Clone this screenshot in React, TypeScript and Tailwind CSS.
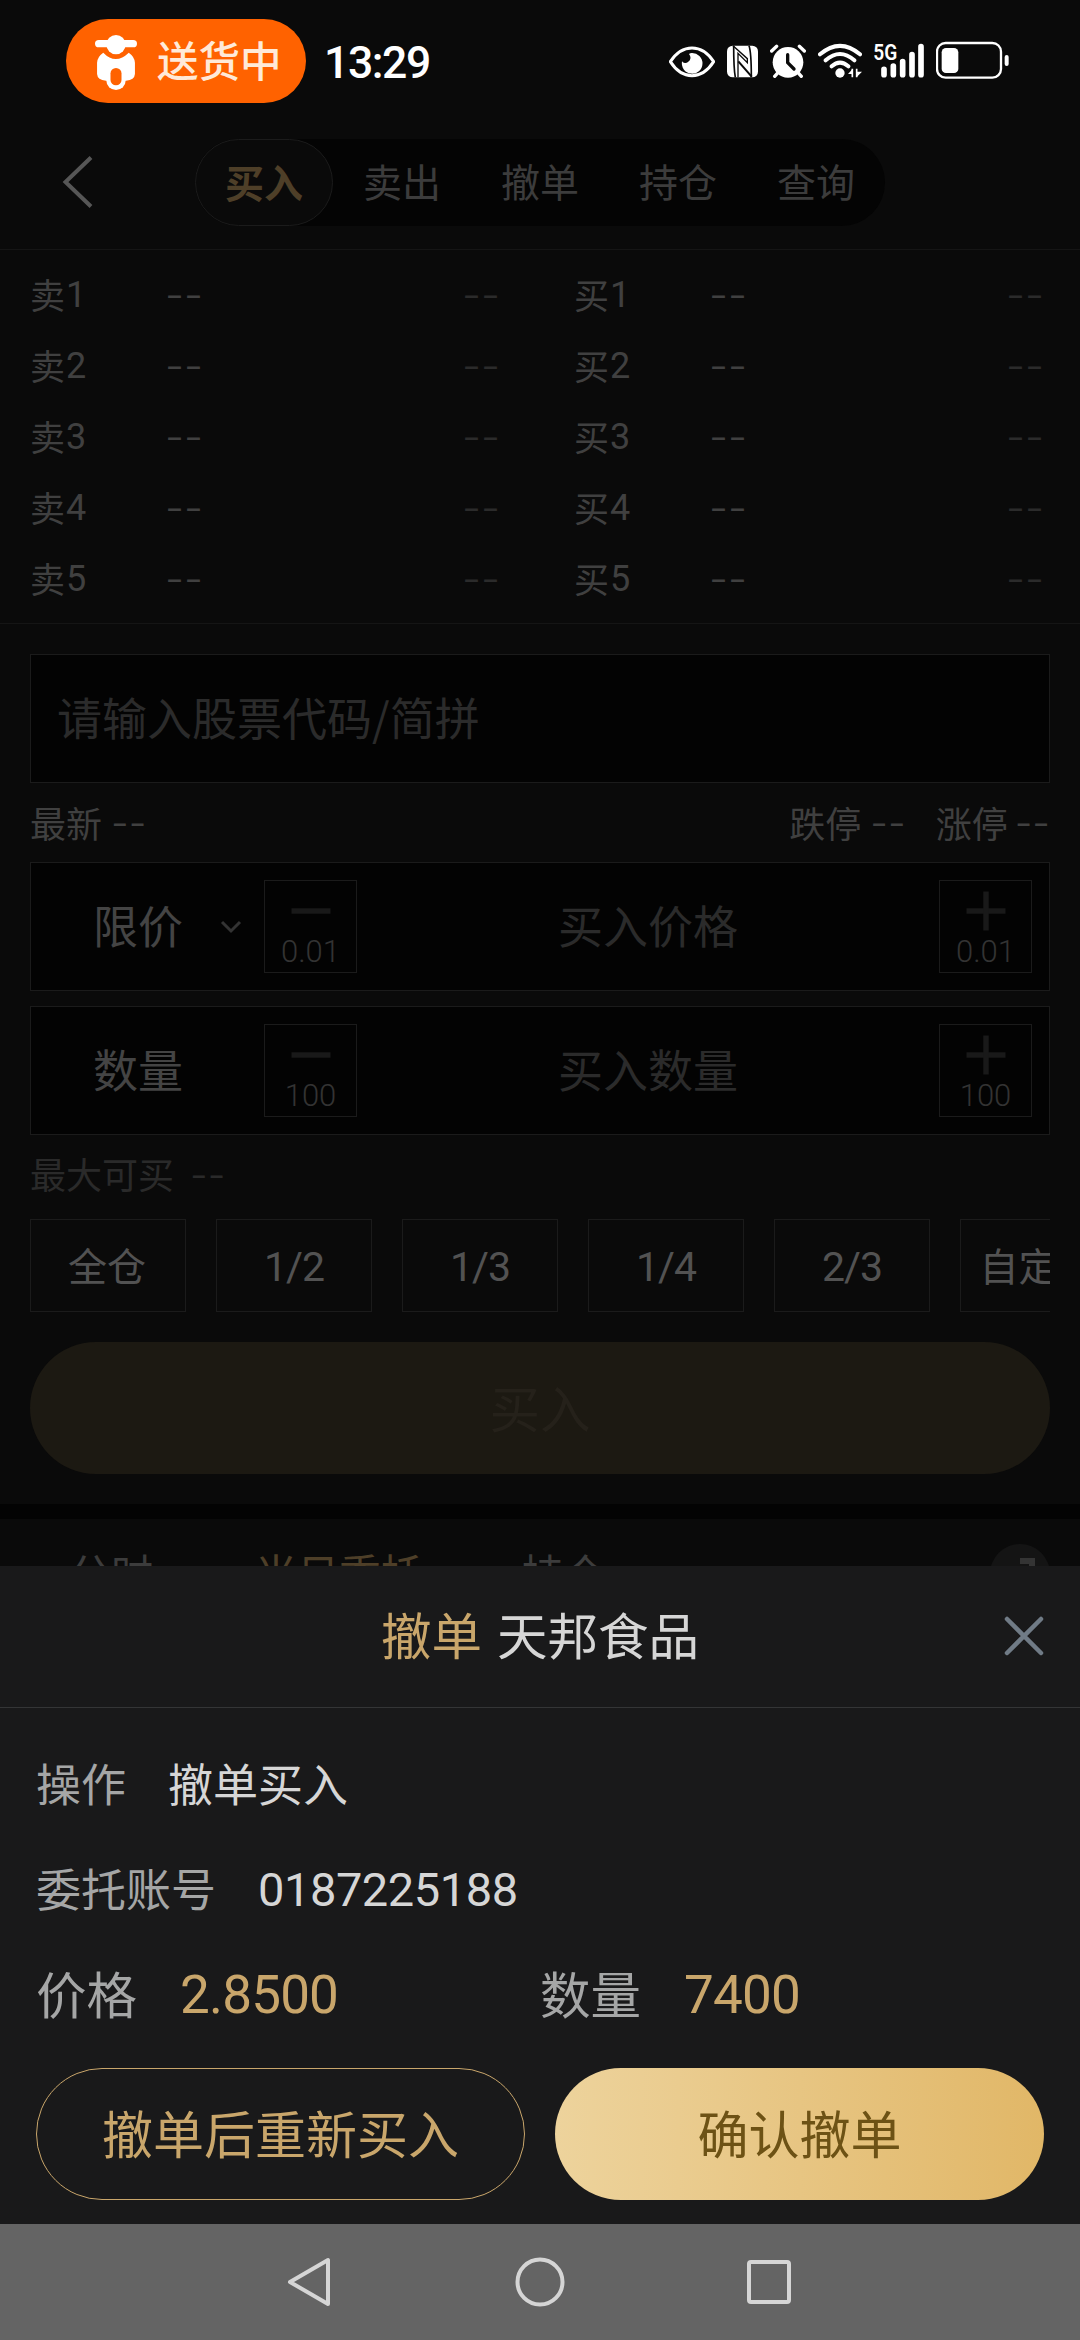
const tabs = ["卖出", "撤单", "持仓", "查询"];
const levels = [1, 2, 3, 4, 5];
const ratios = ["1/2", "1/3", "1/4", "2/3"];

function StatusBar() {
    return (
        <div className="flex h-[124px] items-start">
            <div className="mt-[19px] ml-[66px] flex h-[84px] w-[240px] items-center rounded-full bg-[#ff6200] pl-[29px]">
                <svg className="h-[55px] w-[42px] mb-[-2px]" viewBox="276 105 122 165" preserveAspectRatio="none" fill="#fff">
                    <rect x="276" y="120" width="122" height="22" rx="11" />
                    <ellipse cx="337" cy="134" rx="28" ry="29" />
                    <path d="M300 158 Q336 196 374 158 Q391 170 392 188 V222 Q391 240 366 242 H308 Q283 240 282 222 V188 Q283 170 300 158Z" />
                    <rect x="309" y="192" width="56" height="78" rx="28" />
                    <rect x="321" y="204" width="32" height="52" rx="16" fill="#ff6200" />
                </svg>
                <span className="ml-[20px] pb-[3px] text-[41.5px] leading-none font-medium text-[#ffead8]">送货中</span>
            </div>
            <span className="mt-[37px] ml-[18px] w-[109px] font-['Roboto'] text-[44.5px] font-medium leading-[52px] tracking-[-1.4px] text-white">13:29</span>
            <div className="mt-[32px] ml-auto flex gap-3 pr-[71px]">
                {/* eye comfort */}
                <svg className="h-[60px] w-[46px]" viewBox="27 0 138 180" fill="none">
                    <path d="M31 89 Q58 48 96 48 Q134 48 161 89 Q134 131 96 131 Q58 131 31 89Z" stroke="#fff" strokeWidth="9" strokeLinejoin="round" />
                    <path d="M95 63 A31 31 0 1 1 66 88 A12 12 0 0 0 84 90 Q98 80 87 66 Q91 63 95 63Z" fill="#fff" />
                </svg>
                {/* nfc */}
                <svg className="h-[60px] w-[31px]" viewBox="201 0 93 180">
                    <rect x="201" y="41" width="93" height="95" rx="17" fill="#fff" />
                    <path d="M221 41 Q221 110 226 136 M267 41 Q274 60 274 136" stroke="#0a0a0a" strokeWidth="5" fill="none" />
                    <path d="M219 41 L262 80 V92 L234 64 V136" stroke="#0a0a0a" strokeWidth="4" fill="none" />
                    <path d="M235 88 L275 134" stroke="#0a0a0a" strokeWidth="6" />
                </svg>
                {/* alarm */}
                <svg className="h-[60px] w-[36px]" viewBox="330 0 108 180" fill="none" strokeLinecap="round">
                    <circle cx="384" cy="91" r="46" fill="#fff" />
                    <path d="M335 57 L350 43 M433 57 L418 43 M352 124 L344 133 M416 124 L424 133" stroke="#fff" strokeWidth="10" />
                    <path d="M383 68 V92 L402 111" stroke="#0a0a0a" strokeWidth="10" />
                </svg>
                {/* wifi */}
                <svg className="h-[60px] w-[44px]" viewBox="474 0 132 180" fill="none" strokeLinecap="round">
                    <path d="M480 67 Q540 16 600 67 M497 85 Q540 47 583 85 M515 103 Q540 81 565 103" stroke="#fff" strokeWidth="12" />
                    <circle cx="540" cy="123" r="14" fill="#fff" />
                    <path d="M577 110 V136 M590 136 V110" stroke="#fff" strokeWidth="5" strokeLinecap="butt" />
                    <path d="M564 126 L577 112 V126Z M606 119 L591 134 V119Z" fill="#fff" />
                </svg>
                {/* cellular */}
                <svg className="h-[60px] w-[50px]" viewBox="642 0 150 180" strokeLinecap="round">
                    <text x="640" y="83" fill="#fff" fontFamily="Roboto, sans-serif" fontSize="67" fontWeight="600" textLength="72" lengthAdjust="spacingAndGlyphs">5G</text>
                    <path d="M672 112 V128 M700 102 V128 M728 89 V128 M756 68 V128 M783 44 V128" stroke="#fff" strokeWidth="17" />
                </svg>
                {/* battery */}
                <svg className="h-[60px] w-[73px]" viewBox="828 0 219 180" fill="none">
                    <rect x="831" y="33" width="192" height="104" rx="26" stroke="#fff" strokeWidth="7" />
                    <rect x="845" y="48" width="50" height="75" rx="13" fill="#fff" />
                    <rect x="1034" y="69" width="12" height="33" rx="6" fill="#fff" />
                </svg>
            </div>
        </div>
    );
}

function NavTabs() {
    return (
        <div className="flex h-[126px] border-b border-[#151515]">
            <svg className="mt-[31px] ml-[60px] h-[54px] w-[34px]" viewBox="0 0 34 54" fill="none" stroke="#565656" strokeWidth="4">
                <path d="M31 2.5 L5.5 27 L31 51.5" />
            </svg>
            <div className="mt-[15px] ml-[101px] flex h-[87px] w-[690px] rounded-full bg-[#040404] text-[39px] text-[#3c3c3c]">
                <div className="flex w-[138px] items-center justify-center rounded-full border border-[#1b1b1b] bg-[#0a0a0a] pb-[3px] leading-none font-bold text-[#4e3f28]">买入</div>
                {tabs.map((tab) => (
                    <div key={tab} className="flex w-[138px] items-center justify-center pb-[4px] leading-none">{tab}</div>
                ))}
            </div>
        </div>
    );
}

function QuoteSide({ side }: { side: string }) {
    return (
        <div className="w-[470px]">
            {levels.map((n) => (
                <div key={n} className="flex h-[71px] items-center text-[35px] leading-none text-[#404040]">
                    <div className="flex w-[135px] items-center pb-[2px]">
                        <span>{side}</span>
                        <span className="ml-[1px] pt-[3px] font-['Roboto'] text-[36px]">{n}</span>
                    </div>
                    <Dashes className="text-[42px] text-[#404040]" />
                    <Dashes className="ml-auto text-[42px] text-[#2b2b2b]" />
                </div>
            ))}
        </div>
    );
}

function Dashes({ className }: { className: string }) {
    return <span className={`font-['Inter'] font-light leading-none ${className}`}>--</span>;
}

function StepButton({ plus, step }: { plus?: boolean; step: string }) {
    return (
        <div className="flex h-[93px] w-[93px] flex-col items-center border border-[#1b1b1b] pt-[10px]">
            <svg className="h-[40px] w-[40px]" viewBox="0 0 40 40" stroke="#191919" strokeWidth="5.5">
                <path d="M0.5 20 H39.5" />
                {plus && <path d="M20 0.5 V39.5" />}
            </svg>
            <span className="mt-[5px] font-['Roboto'] text-[31px] font-light leading-none text-[#333]">{step}</span>
        </div>
    );
}

function StepRow({ label, placeholder, step, chevron }: { label: string; placeholder: string; step: string; chevron?: boolean }) {
    return (
        <div className="flex h-[129px] items-center border border-[#1b1b1b] bg-[#030303] pr-[17px] text-[45px] leading-none">
            <div className="flex w-[233px] items-center pl-[62px]">
                <span className="pb-[4px] text-[#444]">{label}</span>
                {chevron && (
                    <svg className="ml-[37px] h-[14px] w-[22px]" viewBox="0 0 22 14" fill="none" stroke="#333" strokeWidth="3">
                        <path d="M2 2 L11 11 L20 2" />
                    </svg>
                )}
            </div>
            <StepButton step={step} />
            <span className="flex-1 pb-[4px] text-center text-[#2b2b2b]">{placeholder}</span>
            <StepButton plus step={step} />
        </div>
    );
}

function OrderForm() {
    return (
        <div className="flex flex-col px-[30px] pt-[30px]">
            <div className="flex h-[129px] items-center border border-[#1b1b1b] bg-[#030303] pb-[4px] pl-[26px] text-[45px] leading-none text-[#2b2b2b]">请输入股票代码/简拼</div>
            <div className="flex h-[79px] items-center text-[36px] leading-none text-[#404040]">
                <span className="pb-[2px]">最新</span>
                <Dashes className="ml-[9px] text-[39px]" />
                <span className="ml-auto pb-[2px]">跌停</span>
                <Dashes className="ml-[9px] text-[39px]" />
                <span className="ml-[30px] pb-[2px]">涨停</span>
                <Dashes className="ml-[7px] text-[39px]" />
            </div>
            <StepRow label="限价" placeholder="买入价格" step="0.01" chevron />
            <div className="h-[15px]" />
            <StepRow label="数量" placeholder="买入数量" step="100" />
            <div className="flex h-[84px] items-center pb-[8px] text-[36px] leading-none text-[#2a2a2a]">
                <span>最大可买</span>
                <Dashes className="ml-[16px] pt-[2px] text-[39px]" />
            </div>
            <div className="flex gap-[30px] overflow-hidden text-[39px] leading-none text-[#525252]">
                <div className="flex h-[93px] w-[156px] shrink-0 items-center justify-center border border-[#1b1b1b] pr-[2px] pb-[2px]">全仓</div>
                {ratios.map((r) => (
                    <div key={r} className="flex h-[93px] w-[156px] shrink-0 items-center justify-center border border-[#1b1b1b] pt-[3px] font-['Roboto'] text-[41px] tracking-[-1px]">{r}</div>
                ))}
                <div className="flex h-[93px] w-[156px] shrink-0 items-center justify-center border border-[#1b1b1b] pb-[2px]">自定义</div>
            </div>
            <div className="mt-[30px] flex h-[132px] items-center justify-center rounded-full bg-[#1c1912] pb-[4px] text-[50.5px] leading-none text-[#25211a]">买入</div>
        </div>
    );
}

function ListTabs() {
    return (
        <div className="mt-[30px] border-t-[15px] border-[#030303]">
            <div className="flex h-[110px] items-center pr-[30px] pl-[69px] text-[42px] leading-none text-[#3c3c3c]">
                <span className="pb-[4px]">分时</span>
                <span className="ml-[102px] pb-[4px] text-[#4e3f28]">当日委托</span>
                <span className="ml-[99px] pb-[4px]">持仓</span>
                <svg className="ml-auto h-[60px] w-[60px]" viewBox="0 0 60 60" fill="none">
                    <circle cx="30" cy="30" r="30" fill="#141414" />
                    <path d="M30 17 H42 V30 M30 43 H18 V30" stroke="#343434" strokeWidth="6" />
                </svg>
            </div>
        </div>
    );
}

function CancelSheet() {
    return (
        <div className="h-[658px] bg-[#19191a] leading-none">
            <div className="relative flex h-[142px] items-center justify-center gap-[15px] border-b border-[#343536] pb-[6px] text-[50.5px]">
                <span className="text-[#c9a66b]">撤单</span>
                <span className="text-[#d6d6d6]">天邦食品</span>
                <svg className="absolute top-[49px] right-[35px] h-[42px] w-[42px]" viewBox="0 0 42 42" stroke="#707b86" strokeWidth="4.5" strokeLinecap="round">
                    <path d="M4 4 L38 38 M38 4 L4 38" />
                </svg>
            </div>
            <div className="flex flex-col px-[36px] pt-[22px] text-[45px] text-[#a5a6a6]">
                <div className="flex h-[105px] items-center gap-[42px]">
                    <span>操作</span>
                    <span className="text-[#d6d6d6]">撤单买入</span>
                </div>
                <div className="flex h-[105px] items-center gap-[42px]">
                    <span>委托账号</span>
                    <span className="pt-[4px] font-['Roboto'] text-[47px] tracking-[-0.45px] text-[#d6d6d6]">0187225188</span>
                </div>
                <div className="grid h-[104px] grid-cols-2 items-center text-[50.5px]">
                    <div className="flex items-center gap-[43px]">
                        <span>价格</span>
                        <span className="pt-[7px] font-['Roboto'] text-[53px] tracking-[-0.8px] text-[#c9a66b]">2.8500</span>
                    </div>
                    <div className="flex items-center gap-[43px]">
                        <span>数量</span>
                        <span className="pt-[7px] font-['Roboto'] text-[53px] tracking-[-0.8px] text-[#c9a66b]">7400</span>
                    </div>
                </div>
                <div className="mt-[24px] grid grid-cols-2 gap-[30px] text-[51px]">
                    <div className="flex h-[132px] items-center justify-center rounded-full border border-[#c9a66b] pb-[4px] text-[#c9a66b]">撤单后重新买入</div>
                    <div className="flex h-[132px] items-center justify-center rounded-full bg-linear-to-r from-[#edd39c] to-[#e1b767] pb-[4px] text-[#6d5215]">确认撤单</div>
                </div>
            </div>
        </div>
    );
}

export default function App() {
    return (
        <div className="flex h-[2340px] w-[1080px] flex-col overflow-hidden bg-[#0a0a0a] font-['Noto_Sans_CJK_SC',sans-serif]">
            <div className="h-[1566px] overflow-hidden">
                <StatusBar />
                <NavTabs />
                <div className="flex h-[374px] justify-between border-b border-[#151515] pt-[9px] pr-[36px] pl-[30px]">
                    <QuoteSide side="卖" />
                    <QuoteSide side="买" />
                </div>
                <OrderForm />
                <ListTabs />
            </div>
            <CancelSheet />
            {/* system navigation */}
            <div className="flex h-[116px] items-center bg-[#646464] pl-[286px]">
                <svg className="h-[52px] w-[46px]" viewBox="0 0 46 52" fill="none" stroke="#d5d5d5" strokeWidth="4" strokeLinejoin="round">
                    <path d="M4 26 L42 4 V48Z" />
                </svg>
                <svg className="ml-[182px] h-[52px] w-[52px]" viewBox="0 0 52 52" fill="none" stroke="#d5d5d5" strokeWidth="4">
                    <circle cx="26" cy="26" r="22.5" />
                </svg>
                <svg className="ml-[177px] h-[52px] w-[52px]" viewBox="0 0 52 52" fill="none" stroke="#d5d5d5" strokeWidth="4">
                    <rect x="6" y="6" width="40" height="40" rx="2" />
                </svg>
            </div>
        </div>
    );
}
